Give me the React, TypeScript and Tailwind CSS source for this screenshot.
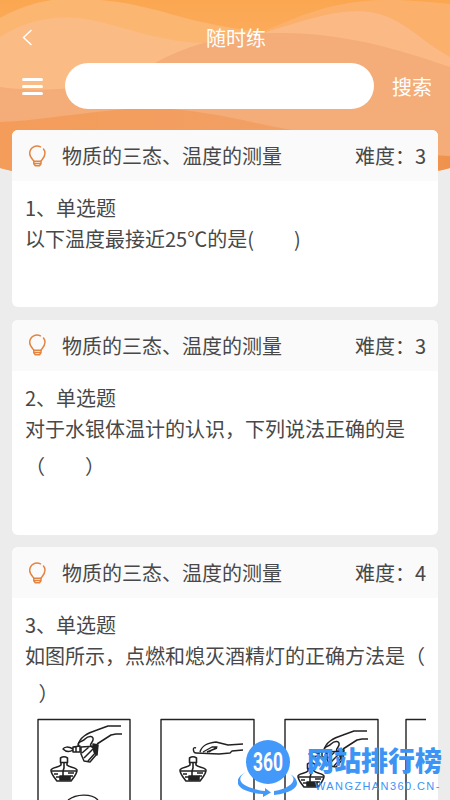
import type { ReactNode } from "react";

interface Question {
  topic: string;
  level: number;
  lines: string[];
  height: string;
  figure?: ReactNode;
}

function HeaderWaves() {
  return (
    <svg className="absolute inset-0 -z-10" width="450" height="176" viewBox="0 0 450 176" fill="none">
      <defs>
        <linearGradient id="base" x1="0" y1="0" x2="0" y2="1">
          <stop offset="0" stopColor="#fba751" />
          <stop offset="0.3" stopColor="#fbad60" />
        </linearGradient>
        <linearGradient id="bottom" x1="0" y1="0" x2="1" y2="0">
          <stop offset="0" stopColor="#f49c5a" />
          <stop offset="0.7" stopColor="#f2a066" />
          <stop offset="1" stopColor="#ef924c" />
        </linearGradient>
      </defs>
      <path d="M0 0H450V168C440 171 430 172 420 173C300 176 150 176 12 171L0 168Z" fill="url(#base)" />
      <path d="M0 18C16 9 32 3 52 0H100C140 3 170 15 202 22C225 27 245 31 267 32L200 70H0Z" fill="#fbb672" />
      <path d="M262 32C300 16 330 1 385 0C410 0 430 2 450 4V80H262Z" fill="#fbb16c" />
      <path d="M0 37C25 21 48 17 70 17.500C110 19 150 42 205 43L155 100H0Z" fill="#fbbb84" />
      <path d="M266 32C300 22 325 12 358 11C400 12 415 38 450 57V80H266Z" fill="#fbb985" />
      <path d="M0 87C50 94 110 88 155 63C190 43 235 33 275 33C340 32 395 48 450 67V160H0Z" fill="#f4ac78" />
      <path d="M0 122C50 120 90 110 150 108C205 109 245 122 292 130C350 142 395 154 450 156V168C440 171 430 172 420 173C300 176 150 176 12 171L0 168Z" fill="url(#bottom)" />
    </svg>
  );
}

function BulbIcon() {
  return (
    <svg width="20" height="24" viewBox="0 0 20 24" fill="none" stroke="#e38540" strokeWidth="1.500" strokeLinecap="round" strokeLinejoin="round">
      <path d="M13.500 2.800C8.500 0.300 2.700 4 2.700 9.500C2.700 13 5.200 15 7 17.200H13.800C15.500 15 18 13 18 9.300C18 7.500 17.400 6.100 16.500 5" />
      <path d="M6.800 17.200V19.800L8.300 21.800H12.500L14 19.800V17.200M7 19.600H13.800" />
    </svg>
  );
}

function Lamp() {
  return (
    <g strokeWidth="1.600">
      <path d="M-3.500 1Q0 -1.500 3.500 1V5.500H-3.500Z" />
      <path d="M-3 5V8C-5 10.500 -12 10 -13 13C-13 17 -10 20 -7 24H7C10 20 13 17 13 13C12 10 5 10.500 3 8V5M-12 14H12M0 5V11L-1 14V22M-10 17H-6M4 16H10M-8 20H-4M6 19H9" />
      <path d="M-4 19H6V23H-4Z" fill="#222" />
    </g>
  );
}

function CapHand() {
  return (
    <g strokeWidth="1.500">
      <path d="M41 28C42 19 51 15 60 12L71 8H84M60 26L74 17L79 16H85" />
      <path d="M42 28C39 23 46 24 48 21C52 17 57 18 56 22C55 26 51 26 56 30" />
      <path d="M44 29L60 28L59 37L53 44L47 43L44 36ZM45 35L52 29M47 40L57 30M51 43L60 33" />
      <path d="M36 29L43 28V34H36ZM39 29V34M36 31C31 28 27 29 26 31C29 34 33 34 36 32" />
      <path d="M56 26L61 27L60 37L57 34Z" fill="#222" />
    </g>
  );
}

function LampFigure() {
  return (
    <svg className="mt-px block" width="401" height="88" viewBox="0 0 401 88" fill="none" stroke="#222" strokeWidth="1.400" strokeLinejoin="round">
      <path d="M13 90V7.500H105V90M136 90V7.500H229V90M260 90V7.500H353V90M381 90V7.500H401" />
      <g transform="translate(12 6)">
        <CapHand />
      </g>
      <g transform="translate(39 45)">
        <Lamp />
      </g>
      <path d="M43 88C51 82 66 81 73 88" />
      <path d="M171 36C167 34 168 41 171 41L194 42L205 41L207 39L218 38M175 40C177 33 183 31 191 30L203 33L218 32M178 40L187 35H192L184 40M182 40L192 36" />
      <g transform="translate(168 45)">
        <Lamp />
      </g>
      <g transform="translate(258 11)">
        <CapHand />
      </g>
      <g transform="translate(286 51)">
        <Lamp />
      </g>
    </svg>
  );
}

const TOPIC = "物质的三态、温度的测量";

const questions: Question[] = [
  {
    topic: TOPIC,
    level: 3,
    lines: ["以下温度最接近25℃的是(\u3000\u3000)"],
    height: "h-[177px]",
  },
  {
    topic: TOPIC,
    level: 3,
    lines: ["对于水银体温计的认识，下列说法正确的是", "（\u3000\u3000）"],
    height: "h-[215px]",
  },
  {
    topic: TOPIC,
    level: 4,
    lines: ["如图所示，点燃和熄灭酒精灯的正确方法是（", "\u00a0\u00a0\u00a0）"],
    height: "h-[300px]",
    figure: <LampFigure />,
  },
];

function QuestionCard({ question, index }: { question: Question; index: number }) {
  return (
    <article className={`shrink-0 overflow-hidden rounded-md bg-white ${question.height}`}>
      <header className="flex h-[51px] items-center bg-[#fafafa] pr-3 pl-[15px]">
        <BulbIcon />
        <h2 className="ml-[15px] flex-1 pt-px">{question.topic}</h2>
        <span className="pt-px">难度：{question.level}</span>
      </header>
      <div className="pt-3.5 pr-3 pl-[13px]">
        <p className="leading-[25px]">{index + 1}、单选题</p>
        {question.lines.map((line) => (
          <p key={line} className="leading-[37px] whitespace-pre">{line}</p>
        ))}
        {question.figure}
      </div>
    </article>
  );
}

function Watermark() {
  return (
    <div className="absolute top-[738px] left-[238px] flex text-[#3c94f5]">
      <svg width="60" height="62" viewBox="0 0 60 62">
        <circle cx="30" cy="24" r="22" fill="#4299fa" />
        <path d="M8 34C-4 41 3 50 27 53V50L33 54.500L25 59V56C-4 54 -6 41 8 34ZM52 36C60 41 54 50 36 53V57C62 54 64 43 52 36Z" fill="#4299fa" />
        <text x="30" y="33" textAnchor="middle" fill="#fff" fontFamily="Roboto, sans-serif" fontWeight="700" fontSize="26" textLength="30" lengthAdjust="spacingAndGlyphs">360</text>
      </svg>
      <div className="ml-[9px] pt-1">
        <div className="text-[27px] leading-[36px] font-black">网站排行榜</div>
        <div className="pl-2 font-['Liberation_Sans'] text-[11px] leading-4 tracking-[1.400px] whitespace-nowrap">WANGZHAN360.CN-</div>
      </div>
    </div>
  );
}

export default function App() {
  return (
    <div className="relative isolate h-[800px] w-[450px] overflow-hidden bg-[#ececec] font-['Noto_Sans_CJK_SC',sans-serif] text-[20px] text-[#484848]">
      <HeaderWaves />

      {/* Title bar */}
      <div className="flex h-[63px] items-center pt-3 pl-[22px] text-white">
        <svg width="11" height="17" viewBox="0 0 11 17" fill="none" stroke="currentColor" strokeWidth="1.500">
          <path d="M9.500 1L1.500 8.500L9.500 16" />
        </svg>
        <h1 className="flex-1 pr-[11px] text-center">随时练</h1>
      </div>

      {/* Search */}
      <div className="flex h-[46px] items-center text-white">
        <button className="ml-[22px] flex w-[21px] flex-col gap-1">
          <span className="h-[3px] rounded-full bg-white" />
          <span className="h-[3px] rounded-full bg-white" />
          <span className="h-[3px] rounded-full bg-white" />
        </button>
        <input className="ml-[22px] h-[46px] w-[309px] rounded-full bg-white px-5 text-[#484848] outline-none" />
        <button className="ml-[18px] pt-0.5">搜索</button>
      </div>

      <main className="mt-[21px] flex flex-col gap-[12.500px] px-3">
        {questions.map((question, i) => (
          <QuestionCard key={i} question={question} index={i} />
        ))}
      </main>

      <Watermark />
    </div>
  );
}
